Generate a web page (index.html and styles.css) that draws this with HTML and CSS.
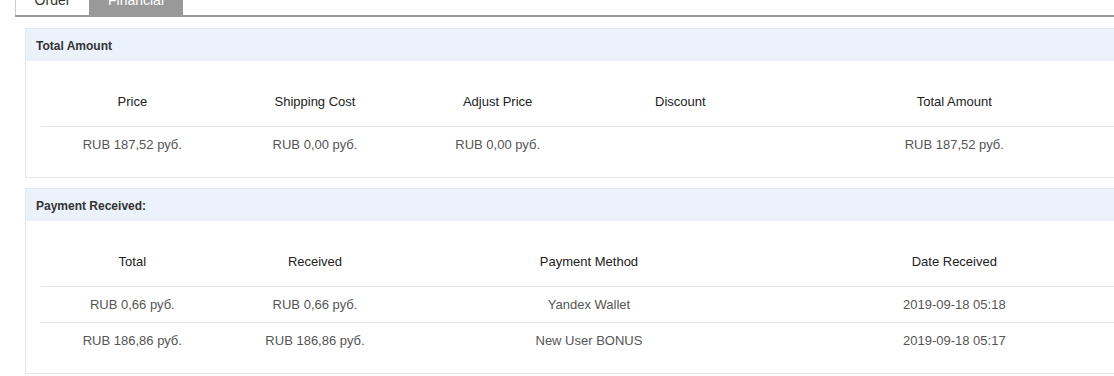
FILE: index.html
```html
<!DOCTYPE html>
<html lang="en">
<head>
    <meta charset="UTF-8">
    <meta name="viewport" content="width=device-width, initial-scale=1.0">
    <title>Order financial</title>
    <link rel="stylesheet" href="styles.css">
</head>
<body>
    <div class="page">
        <ul class="tabs">
            <li class="tab">Order</li>
            <li class="tab active">Financial</li>
        </ul>
        <div class="tabContent">
            <div class="panel">
                <div class="panelHeading">Total Amount</div>
                <div class="panelBody">
                    <table class="grid">
                        <colgroup>
                            <col><col><col><col><col><col>
                        </colgroup>
                        <thead>
                            <tr>
                                <th>Price</th>
                                <th>Shipping Cost</th>
                                <th>Adjust Price</th>
                                <th>Discount</th>
                                <th colspan="2">Total Amount</th>
                            </tr>
                        </thead>
                        <tbody>
                            <tr>
                                <td>RUB 187,52 руб.</td>
                                <td>RUB 0,00 руб.</td>
                                <td>RUB 0,00 руб.</td>
                                <td></td>
                                <td colspan="2">RUB 187,52 руб.</td>
                            </tr>
                        </tbody>
                    </table>
                </div>
            </div>

            <div class="panel">
                <div class="panelHeading">Payment Received:</div>
                <div class="panelBody">
                    <table class="grid">
                        <colgroup>
                            <col><col><col><col><col><col>
                        </colgroup>
                        <thead>
                            <tr>
                                <th>Total</th>
                                <th>Received</th>
                                <th colspan="2">Payment Method</th>
                                <th colspan="2">Date Received</th>
                            </tr>
                        </thead>
                        <tbody>
                            <tr>
                                <td>RUB 0,66 руб.</td>
                                <td>RUB 0,66 руб.</td>
                                <td colspan="2">Yandex Wallet</td>
                                <td colspan="2">2019-09-18 05:18</td>
                            </tr>
                            <tr>
                                <td>RUB 186,86 руб.</td>
                                <td>RUB 186,86 руб.</td>
                                <td colspan="2">New User BONUS</td>
                                <td colspan="2">2019-09-18 05:17</td>
                            </tr>
                        </tbody>
                    </table>
                </div>
            </div>
        </div>
    </div>
</body>
</html>
```

FILE: styles.css
```css
* {
    margin: 0;
    padding: 0;
    box-sizing: border-box;
}

html, body {
    overflow: hidden;
}

body {
    background: #fff;
    font-family: "Liberation Sans", Arial, sans-serif;
    color: #333;
}

.page {
    margin-left: 15px;
    width: 1160px;
}

/* tabs */
.tabs {
    list-style: none;
    display: flex;
    margin-top: -15px;
    border-bottom: 2px solid #999;
}

.tab {
    height: 30px;
    line-height: 30px;
    font-size: 14px;
    text-align: center;
    color: #333;
    background: #fff;
    border-left: 1px solid #ccc;
    width: 74px;
}

.tab.active {
    width: 94px;
    background: #999;
    border-left: none;
    color: #fff;
}

.tabContent {
    padding: 11px 0 0 10px;
}

/* panels */
.panel {
    width: 1128px;
    border: 1px solid #dfe6ef;
    margin-bottom: 10px;
    background: #fff;
}

.panelHeading {
    height: 32px;
    line-height: 30px;
    padding: 2px 0 0 10px;
    background: #ebf2fc;
    font-size: 12px;
    font-weight: bold;
    color: #333;
}

.panelBody {
    padding: 15px;
}

.grid {
    width: 1096px;
    table-layout: fixed;
    border-collapse: collapse;
    font-size: 13px;
}

.grid th {
    height: 50px;
    padding-top: 2px;
    font-weight: normal;
    color: #222;
    text-align: center;
    vertical-align: middle;
}

.grid td {
    height: 36px;
    border-top: 1px solid #e3e3e3;
    color: #555;
    text-align: center;
    vertical-align: middle;
}
```
